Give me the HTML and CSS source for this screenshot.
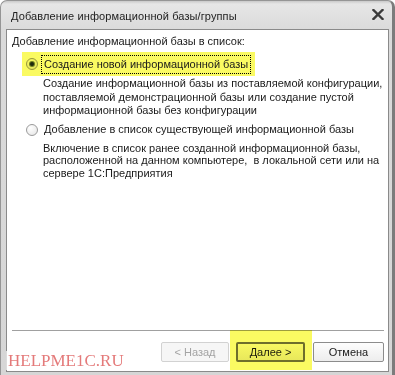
FILE: index.html
```html
<!DOCTYPE html>
<html lang="ru">
<head>
  <meta charset="UTF-8" />
  <title>Добавление информационной базы/группы</title>
  <link rel="stylesheet" href="styles.css">
</head>
<body>
  <div class="window">
    <div class="titlebar">
      <span class="title">Добавление информационной базы/группы</span>
      <svg class="close" width="12" height="11" viewBox="0 0 12 11">
        <path d="M1.5 1 L10.5 10 M10.5 1 L1.5 10" stroke="#3a3a3a" stroke-width="2.4" stroke-linecap="square" fill="none"/>
      </svg>
    </div>

    <div class="client">
      <div class="heading">Добавление информационной базы в список:</div>

      <!-- вариант 1 -->
      <div class="option marked">
        <span class="radio checked"></span>
        <span class="label focus">Создание новой информационной базы</span>
      </div>
      <div class="desc">
        Создание информационной базы из поставляемой конфигурации,<br>
        поставляемой демонстрационной базы или создание пустой<br>
        информационной базы без конфигурации
      </div>

      <!-- вариант 2 -->
      <div class="option">
        <span class="radio"></span>
        <span class="label">Добавление в список существующей информационной базы</span>
      </div>
      <div class="desc desc-second">
        Включение в список ранее созданной информационной базы,<br>
        расположенной на данном компьютере,&nbsp; в локальной сети или на<br>
        сервере 1С:Предприятия
      </div>

      <div class="spacer"></div>
      <div class="separator"></div>

      <div class="buttons">
        <button class="btn" disabled>&lt; Назад</button>
        <span class="mark-wrap">
          <button class="btn btn-default">Далее &gt;</button>
          <span class="marker"></span>
        </span>
        <button class="btn">Отмена</button>
      </div>
    </div>

    <div class="watermark">HELPME1C.RU</div>
  </div>
</body>
</html>
```

FILE: styles.css
```css
:root {
  --frame: #d6d6d6;
  --line: #8a8a8a;
  --text: #1a1a1a;
  --yellow: #fafa62;
}

* {
  margin: 0;
  padding: 0;
  box-sizing: border-box;
}

body {
  width: 395px;
  height: 375px;
  overflow: hidden;
  background: #fff;
  font-family: 'Liberation Sans', Arial, sans-serif;
  font-size: 11px;
  color: var(--text);
}

.window {
  position: relative;
  width: 395px;
  height: 375px;
  display: flex;
  flex-direction: column;
  background: linear-gradient(to bottom, #c9c9c9 0, #e6e6e6 3px, #dadada 30px, var(--frame) 100%);
  border: 1px solid #959595;
  border-right: 3px solid #7c7c7c;
  border-bottom: none;
  border-radius: 7px 7px 0 0;
}

.titlebar {
  height: 28px;
  display: flex;
  align-items: center;
  justify-content: space-between;
  padding: 0 8px 0 10px;
}

.title {
  font-size: 11px;
  letter-spacing: 0.1px;
  color: #222;
  margin-top: 2px;
}

.close {
  margin-top: -1px;
}

.client {
  flex: 1;
  display: flex;
  flex-direction: column;
  margin: 0 3px 3px 5px;
  background: #fff;
  border: 1px solid var(--line);
  padding-top: 5px;
}

.heading {
  line-height: 13px;
  padding-left: 5px;
}

.option {
  display: flex;
  align-items: center;
  align-self: flex-start;
  gap: 3px;
  height: 24px;
  margin-left: 15px;
  padding: 0 4px;
}

.option.marked {
  margin-top: 4px;
  background: var(--yellow);
}

.radio {
  width: 12px;
  height: 12px;
  border-radius: 50%;
  border: 1px solid #9a9a9a;
  background: radial-gradient(circle at 35% 30%, #fff 0, #ececec 70%, #d8d8d8 100%);
  mix-blend-mode: multiply;
  display: flex;
  align-items: center;
  justify-content: center;
}

.radio.checked::after {
  content: "";
  width: 4px;
  height: 4px;
  border-radius: 50%;
  background: #1e2a1e;
  box-shadow: 0 0 0 1px #6f7f4f;
}

.label {
  line-height: 13px;
  padding: 2px 2px;
  border: 1px dotted transparent;
}

.label.focus {
  border-color: #000;
}

.desc {
  line-height: 13.5px;
  margin: 1px 0 0 36px;
}

.desc-second {
  line-height: 12.5px;
  margin-top: 0;
}

.spacer {
  flex: 1;
}

.separator {
  height: 1px;
  background: #a0a0a0;
  margin: 0 4px 0 5px;
}

.buttons {
  display: flex;
  justify-content: flex-end;
  gap: 7px;
  padding: 11px 4px 9px 0;
}

.btn {
  height: 20px;
  font-family: inherit;
  font-size: 11px;
  color: var(--text);
  background: linear-gradient(to bottom, #fdfdfd, #ededed);
  border: 1px solid #8c8c8c;
  border-radius: 2px;
}

.btn[disabled] {
  width: 68px;
  color: #a4a4a4;
  border-color: #d2d2d2;
  background: #f6f6f6;
}

.btn-default {
  width: 69px;
  border: 2px solid #707070;
}

.buttons > .btn:last-child {
  width: 71px;
  margin-left: 1px;
}

.mark-wrap {
  position: relative;
  display: flex;
}

.marker {
  position: absolute;
  left: -6px;
  right: -7px;
  top: -12px;
  bottom: -8px;
  background: var(--yellow);
  mix-blend-mode: multiply;
}

.watermark {
  position: absolute;
  left: 5px;
  bottom: 5px;
  padding: 1px 2px 0;
  background: rgba(255, 255, 255, 0.7);
  font-family: 'Liberation Serif', 'Times New Roman', serif;
  font-size: 17px;
  line-height: 18px;
  color: #e47a7a;
}
```
